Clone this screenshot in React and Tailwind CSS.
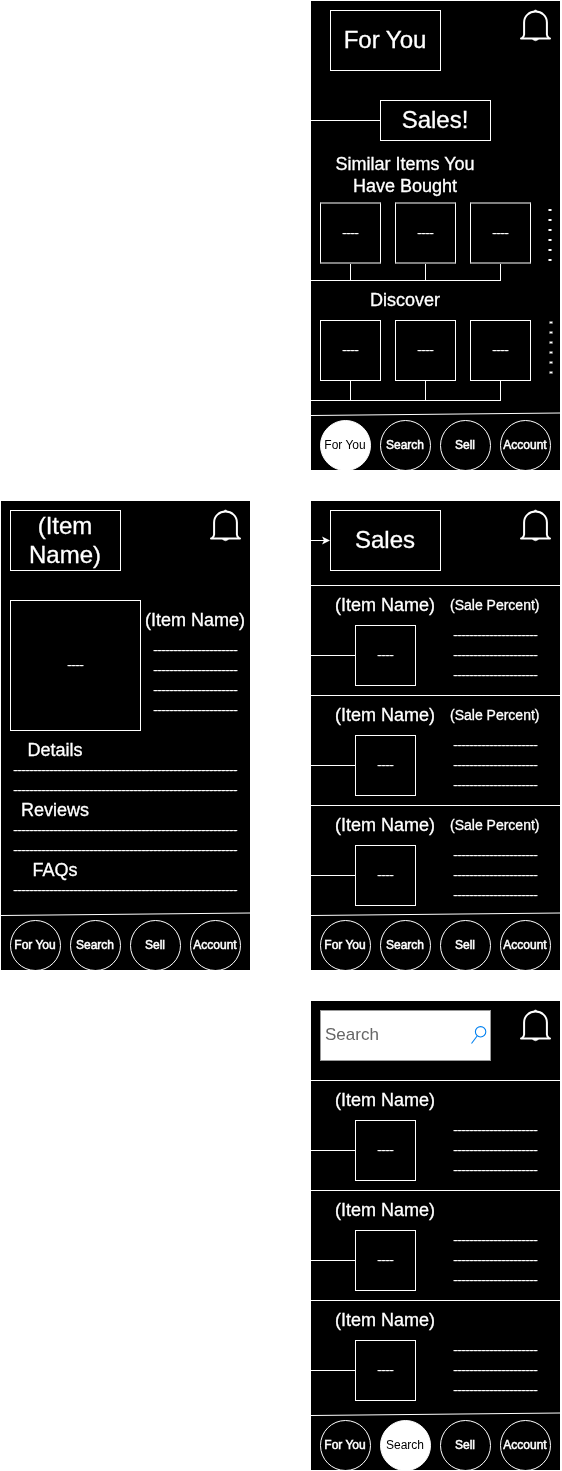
const dashes = (n) => "-".repeat(n);

function Bell() {
  return (
    <svg className="-mt-px block h-[33px] w-[32px] shrink-0" viewBox="0 0 32 33" fill="none" stroke="#fff">
      <path d="M1 29.5H30" strokeWidth="2" strokeLinecap="round" />
      <path d="M1.8 29.2C3.5 28 4.1 27 4.1 25.5V13.5C4.1 7 9.3 2.6 15.5 2.6S26.9 7 26.9 13.5V25.5C26.9 27 27.5 28 29.2 29.2" strokeWidth="2" />
      <path d="M13.3 2.6Q15.5 -0.8 17.7 2.6ZM12.3 30Q15.5 33.6 18.7 30Z" fill="#fff" strokeWidth="0.5" />
    </svg>
  );
}

function TitleBox({ children }) {
  return (
    <div className="flex h-[61px] w-[111px] shrink-0 items-center justify-center border border-white pb-[2px] pr-px text-center text-[24px] leading-[29px] [-webkit-text-stroke:0.3px_white]">
      {children}
    </div>
  );
}

function Dashes({ count }) {
  return (
    <div className="h-5 whitespace-nowrap text-[12px] leading-5 [text-shadow:1px_0_0_#fff]">
      {dashes(count)}
    </div>
  );
}

function Nav({ active }) {
  return (
    <div className="mt-auto shrink-0">
      <svg className="block h-[8px] w-[249px]" viewBox="0 0 249 8">
        <path d="M0 3.5L249 1" stroke="#fff" />
      </svg>
      <div className="flex h-[50px] gap-[9px] pl-[9px]">
        {["For You", "Search", "Sell", "Account"].map((label) => (
          <div
            key={label}
            className={
              label === active
                ? "flex size-[51px] shrink-0 items-center justify-center whitespace-nowrap rounded-full border border-white bg-white pb-[2px] pr-px text-[12px] text-black"
                : "flex size-[51px] shrink-0 items-center justify-center whitespace-nowrap rounded-full border border-white pb-[2px] pr-px text-[12px] [-webkit-text-stroke:0.5px_white]"
            }
          >
            {label}
          </div>
        ))}
      </div>
    </div>
  );
}

function Phone({ active, children }) {
  return (
    <section className="flex h-[469px] w-[249px] flex-col overflow-hidden bg-black text-white will-change-transform">
      {children}
      <Nav active={active} />
    </section>
  );
}

function ItemTiles({ soft }) {
  return (
    <div className="flex gap-[14px]">
      {[0, 1, 2].map((i) => (
        <div key={i} className="flex flex-col items-center">
          <div
            className={
              soft
                ? "flex h-[62px] w-[61px] items-center justify-center border-x border-y-2 border-x-white border-y-[#808080] pr-px text-[12px] [text-shadow:1px_0_0_#fff]"
                : "flex h-[61px] w-[61px] items-center justify-center border border-white pb-[2px] pr-px text-[12px] [text-shadow:1px_0_0_#fff]"
            }
          >
            {dashes(4)}
          </div>
          <div className={soft ? "h-4 w-px bg-white" : "h-[19px] w-px bg-white"} />
        </div>
      ))}
    </div>
  );
}

function Dots({ soft }) {
  return (
    <div className={soft ? "flex flex-col gap-[7px]" : "flex flex-col gap-2"}>
      {[0, 1, 2, 3, 4, 5].map((i) => (
        <div
          key={i}
          className={
            soft
              ? "h-[3px] w-[4px] rounded-[1px] border border-[#777] bg-white"
              : "h-[2px] w-[4px] border-x border-[#888] bg-white"
          }
        />
      ))}
    </div>
  );
}

function ForYouScreen() {
  return (
    <Phone active="For You">
      <div className="flex h-[99px] shrink-0 justify-between pl-[19px] pr-[8px] pt-[9px]">
        <TitleBox>For You</TitleBox>
        <Bell />
      </div>
      <div className="flex h-[41px] shrink-0 items-center">
        <div className="h-px w-[69px] bg-white" />
        <div className="flex h-[41px] w-[111px] items-center justify-center border border-white pb-[2px] pr-px text-[24px] leading-[29px] [-webkit-text-stroke:0.3px_white]">
          Sales!
        </div>
      </div>
      <h2 className="mt-3 w-[188px] text-center text-[18px] leading-[22px] [-webkit-text-stroke:0.3px_white]">
        Similar Items You
        <br />
        Have Bought
      </h2>
      <div className="mt-[5px] flex pl-[9px]">
        <ItemTiles soft />
        <div className="pl-[17px] pt-[7px]">
          <Dots />
        </div>
      </div>
      <div className="h-px w-[190px] shrink-0 bg-white" />
      <h2 className="mt-2 w-[188px] text-center text-[18px] leading-[22px] [-webkit-text-stroke:0.3px_white]">Discover</h2>
      <div className="mt-[9px] flex pl-[9px]">
        <ItemTiles />
        <div className="pl-[18px] pt-px">
          <Dots soft />
        </div>
      </div>
      <div className="h-px w-[190px] shrink-0 bg-white" />
    </Phone>
  );
}

function ItemRow({ percent }) {
  return (
    <div className="h-[110px] shrink-0 border-t border-white pt-[8px]">
      <div className="flex h-[22px] items-center whitespace-nowrap">
        <div className="w-[139px] pl-[24px] text-[18px] leading-[22px] [-webkit-text-stroke:0.3px_white]">(Item Name)</div>
        <div className="text-[14px] [-webkit-text-stroke:0.3px_white]">{percent && "(Sale Percent)"}</div>
      </div>
      <div className="mt-[9px] flex h-[61px]">
        <div className="mt-[30px] h-px w-[44px] bg-white" />
        <div className="flex size-[61px] items-center justify-center border border-white pb-[2px] pr-px text-[12px] [text-shadow:1px_0_0_#fff]">
          {dashes(4)}
        </div>
        <div className="ml-[37px]">
          <Dashes count={21} />
          <Dashes count={21} />
          <Dashes count={21} />
        </div>
      </div>
    </div>
  );
}

function SalesScreen() {
  return (
    <Phone>
      <div className="flex h-[84px] shrink-0 justify-between pr-[8px] pt-[9px]">
        <div className="flex">
          <svg className="mt-[26px] block h-[9px] w-[19px]" viewBox="0 0 19 9">
            <path d="M0 4.5H13" stroke="#fff" />
            <path d="M19 4.5L11 .5L13 4.5L11 8.5Z" fill="#fff" />
          </svg>
          <TitleBox>Sales</TitleBox>
        </div>
        <Bell />
      </div>
      <div className="h-[327px] shrink-0 overflow-hidden">
        <ItemRow percent />
        <ItemRow percent />
        <ItemRow percent />
      </div>
    </Phone>
  );
}

function SearchScreen() {
  return (
    <Phone active="Search">
      <div className="flex h-[79px] shrink-0 justify-between pl-[9px] pr-[8px] pt-[9px]">
        <div className="flex h-[51px] w-[171px] items-center justify-between border border-[#999] bg-white pb-[2px] pl-[4px] pr-[3px] text-[17px] text-[#666]">
          Search
          <svg className="mt-px block h-[18px] w-[16px]" viewBox="0 0 16 18" fill="none" stroke="#0080f0" strokeWidth="1.1">
            <circle cx="9.6" cy="5.8" r="5.2" />
            <path d="M6.1 10L.5 17.5" />
          </svg>
        </div>
        <Bell />
      </div>
      <ItemRow />
      <ItemRow />
      <ItemRow />
    </Phone>
  );
}

function Section({ title, lines }) {
  return (
    <div>
      <h2 className="h-5 w-[108px] text-center text-[18px] leading-5 [-webkit-text-stroke:0.3px_white]">{title}</h2>
      <div className="pl-[12px]">
        {Array.from({ length: lines }, (_, i) => (
          <Dashes key={i} count={56} />
        ))}
      </div>
    </div>
  );
}

function ItemScreen() {
  return (
    <Phone>
      <div className="flex h-[99px] shrink-0 justify-between pl-[9px] pr-[8px] pt-[9px]">
        <TitleBox>
          (Item
          <br />
          Name)
        </TitleBox>
        <Bell />
      </div>
      <div className="flex h-[140px] shrink-0 pl-[9px]">
        <div className="flex size-[131px] shrink-0 items-center justify-center border border-white pb-[2px] pr-px text-[12px] [text-shadow:1px_0_0_#fff]">
          {dashes(4)}
        </div>
        <div className="pl-[4px] pt-[9px]">
          <div className="whitespace-nowrap text-[18px] leading-[22px] [-webkit-text-stroke:0.3px_white]">(Item Name)</div>
          <div className="pl-[8px] pt-[9px]">
            <Dashes count={21} />
            <Dashes count={21} />
            <Dashes count={21} />
            <Dashes count={21} />
          </div>
        </div>
      </div>
      <Section title="Details" lines={2} />
      <Section title="Reviews" lines={2} />
      <Section title="FAQs" lines={1} />
    </Phone>
  );
}

export default function App() {
  return (
    <main className="flex h-[1471px] w-[562px] gap-[61px] overflow-hidden bg-white pl-px pt-px font-['Liberation_Sans',Arial,sans-serif]">
      <div className="pt-[500px]">
        <ItemScreen />
      </div>
      <div className="flex flex-col gap-[31px]">
        <ForYouScreen />
        <SalesScreen />
        <SearchScreen />
      </div>
    </main>
  );
}
